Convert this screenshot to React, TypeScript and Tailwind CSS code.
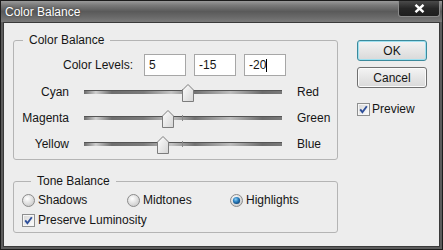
import React, { useId } from "react";

type SliderRow = {
  left: string;
  right: string;
  value: number;
};

const sliderRows: SliderRow[] = [
  { left: "Cyan", right: "Red", value: 5 },
  { left: "Magenta", right: "Green", value: -15 },
  { left: "Yellow", right: "Blue", value: -20 },
];

const TRACK_W = 198;

const CheckBox = () => {
  const id = useId();
  return (
    <svg width="13" height="13" viewBox="0 0 13 13" className="shrink-0">
      <defs>
        <linearGradient id={id} x1="0" y1="0" x2="1" y2="1">
          <stop offset="0" stopColor="#d9d9d9" />
          <stop offset="1" stopColor="#fbfbfb" />
        </linearGradient>
      </defs>
      <rect x="0.5" y="0.5" width="12" height="12" fill="#f6f6f6" stroke="#8e8f8f" />
      <rect x="2" y="2" width="9" height="9" fill={`url(#${id})`} />
      <path d="M3.2 6.4 L5.4 9.2 L9.8 3.2" stroke="#2e4f9a" strokeWidth="1.9" fill="none" />
    </svg>
  );
};

const Radio = ({ checked }: { checked?: boolean }) => {
  const id = useId();
  return (
    <svg width="13" height="13" viewBox="0 0 13 13" className="shrink-0">
      <defs>
        <radialGradient id={id} cx="0.4" cy="0.35" r="0.7">
          <stop offset="0" stopColor="#ffffff" />
          <stop offset="1" stopColor="#c9c9c9" />
        </radialGradient>
        <radialGradient id={`${id}d`} cx="0.4" cy="0.35" r="0.7">
          <stop offset="0" stopColor="#8fd0f5" />
          <stop offset="0.5" stopColor="#2a7fbf" />
          <stop offset="1" stopColor="#0d3f70" />
        </radialGradient>
      </defs>
      <circle cx="6.5" cy="6.5" r="6" fill={`url(#${id})`} stroke="#8b8b8b" />
      {checked && <circle cx="6.5" cy="6.5" r="3.6" fill={`url(#${id}d)`} />}
    </svg>
  );
};

const Thumb = () => {
  const id = useId();
  return (
    <svg width="12" height="18" viewBox="0 0 12 18">
      <defs>
        <linearGradient id={id} x1="0" y1="0" x2="1" y2="1">
          <stop offset="0" stopColor="#ffffff" />
          <stop offset="1" stopColor="#d4d4d4" />
        </linearGradient>
      </defs>
      <path d="M0.5 17.5 V6 L6 0.5 L11.5 6 V17.5 Z" fill={`url(#${id})`} stroke="#7c7c7c" />
    </svg>
  );
};

const Slider = ({ value }: { value: number }) => {
  const center = TRACK_W / 2 + value * 0.99;
  return (
    <div className="relative w-[198px] h-[26px] flex items-center">
      <div className="w-full h-[4px] border-t border-[#555] bg-[linear-gradient(to_right,#6a6a6a,#cfcfcf_6%,#6e6e6e_14%,#7a7a7a_30%,#c4c4c4_44%,#727272_56%,#bdbdbd_74%,#6c6c6c_90%,#7a7a7a)]" />
      <div className="absolute left-[98px] top-[10px] w-px h-[6px] bg-[#8a8a8a]" />
      {/* thumb sits over the track */}
      <div className="absolute top-[5px] flex" style={{ left: center - 6 }}>
        <Thumb />
      </div>
    </div>
  );
};

const LevelBox = ({ text, caret }: { text: string; caret?: boolean }) => (
  <div className="w-[42px] h-[22px] bg-white border border-[#a7a7a7] flex items-center pl-[4px]">
    <span>{text}</span>
    {caret && <span className="w-px h-[13px] bg-black" />}
  </div>
);

export default function App() {
  return (
    <div className="w-[443px] h-[250px] flex flex-col bg-[#5c5c5c] border border-[#1c1c1c] font-['Liberation_Sans',Arial,sans-serif] text-[12px] leading-[14px] text-[#151515]">
      <div className="h-[21px] flex items-start justify-between pl-[4px] bg-[linear-gradient(to_bottom,#9a9a9a_0%,#7a7a7a_20%,#5a5a5a_50%,#686868_75%,#7a7a7a_100%)]">
        <span className="mt-[4px] text-white [text-shadow:0_0_2px_#333]">Color Balance</span>
        <div className="mr-[2px] w-[42px] h-[16px] flex items-center justify-center rounded-b-[3px] border border-t-0 border-[#8a8a8a] bg-[linear-gradient(to_bottom,#4a4a4a,#262626_50%,#1e1e1e)]">
          <svg width="11" height="9" viewBox="0 0 11 9">
            <path d="M1.5 0.8 L9.5 8.2 M9.5 0.8 L1.5 8.2" stroke="#ffffff" strokeWidth="2.4" />
          </svg>
        </div>
      </div>

      <div className="flex-1 mx-[2px] mb-[2px] bg-[#ededed] border border-[#3a3a3a] flex">
        <div className="pl-[9px] pt-[10px] flex flex-col">
          <fieldset className="w-[325px] border border-[#b4b4b4] rounded-[3px] pt-[7px] pb-[2px]">
            <legend className="ml-[9px] px-[6px]">Color Balance</legend>
            <div className="h-[22px] flex items-center">
              <span className="w-[119px] text-right">Color Levels:</span>
              <div className="ml-[11px] flex gap-[8px]">
                <LevelBox text="5" />
                <LevelBox text="-15" />
                <LevelBox text="-20" caret />
              </div>
            </div>
            <div className="mt-[3px] flex flex-col">
              {sliderRows.map((row) => (
                <div key={row.left} className="h-[26px] flex items-center">
                  <span className="w-[55px] text-right">{row.left}</span>
                  <div className="ml-[15px]">
                    <Slider value={row.value} />
                  </div>
                  <span className="ml-[15px]">{row.right}</span>
                </div>
              ))}
            </div>
          </fieldset>

          <fieldset className="mt-[14px] w-[325px] border border-[#b4b4b4] rounded-[3px] pt-[4px] pb-[4px] pl-[8px]">
            <legend className="ml-[9px] px-[6px]">Tone Balance</legend>
            <div className="h-[16px] flex items-center">
              <label className="w-[105px] flex items-center gap-[3px]">
                <Radio />
                Shadows
              </label>
              <label className="w-[103px] flex items-center gap-[3px]">
                <Radio />
                Midtones
              </label>
              <label className="flex items-center gap-[3px]">
                <Radio checked />
                Highlights
              </label>
            </div>
            <div className="mt-[4px] h-[16px] flex items-center gap-[3px]">
              <CheckBox />
              Preserve Luminosity
            </div>
          </fieldset>
        </div>

        <div className="ml-[19px] pt-[17px] flex flex-col">
          <button className="w-[70px] h-[21px] rounded-[3px] border border-[#3b8a9c] bg-[linear-gradient(to_bottom,#f4f4f4,#e6e6e6_50%,#d9d9d9)] shadow-[inset_0_0_0_1px_#9fe0f0]">
            OK
          </button>
          <button className="mt-[6px] w-[70px] h-[21px] rounded-[3px] border border-[#707070] bg-[linear-gradient(to_bottom,#f4f4f4,#e6e6e6_50%,#d9d9d9)] shadow-[inset_0_0_0_1px_#fbfbfb]">
            Cancel
          </button>
          <div className="mt-[14px] h-[14px] flex items-center gap-[2px]">
            <CheckBox />
            Preview
          </div>
        </div>
      </div>
    </div>
  );
}
